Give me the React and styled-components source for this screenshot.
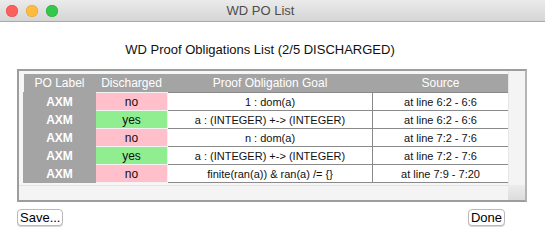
import React from "react";
import styled, { createGlobalStyle } from "styled-components";

const GlobalStyle = createGlobalStyle`
  html, body {
    margin: 0;
    padding: 0;
    background: #ffffff;
  }
  body {
    font-family: "Liberation Sans", Arial, sans-serif;
  }
`;

const Window = styled.div`
  width: 545px;
  height: 246px;
  display: flex;
  flex-direction: column;
  background: #ffffff;
  overflow: hidden;
`;

const TitleBar = styled.div`
  height: 21px;
  display: flex;
  align-items: center;
  padding-left: 6px;
  background: linear-gradient(#ebebeb, #d5d5d5);
  border-bottom: 1px solid #a9a9a9;
  position: relative;
`;

const Light = styled.span`
  width: 12px;
  height: 12px;
  border-radius: 50%;
  margin-right: 8px;
  background: ${(p) => p.color};
  box-shadow: inset 0 0 0 0.5px ${(p) => p.edge};
`;

const WindowTitle = styled.div`
  position: absolute;
  left: 0;
  width: 521px;
  text-align: center;
  font-size: 13px;
  color: #4d4d4d;
  font-family: "Liberation Sans", Arial, sans-serif;
`;

const Heading = styled.div`
  width: 520px;
  text-align: center;
  margin-top: 20px;
  font-size: 13px;
  color: #111;
  line-height: 16px;
`;

const Frame = styled.div`
  margin: 11px 0 0 17px;
  width: 506px;
  height: 129px;
  border: 2px solid #9d9d9d;
  border-right-color: #b5b5b5;
  background: #f6f6f6;
  display: grid;
  grid-template-columns: 1fr 17px;
  grid-template-rows: 1fr 15px;
`;

const Viewport = styled.div`
  padding: 3px 0 0 4px;
  overflow: hidden;
`;

const VScroll = styled.div`
  background: #f4f4f4;
  border-left: 1px solid #e6e6e6;
`;

const HScroll = styled.div`
  background: #f4f4f4;
  border-top: 1px solid #e3e3e3;
`;

const Corner = styled.div`
  background: linear-gradient(#ececec, #dcdcdc);
`;

const Table = styled.table`
  border-collapse: collapse;
  table-layout: fixed;
  width: 485px;
  font-size: 11px;
  font-family: "Liberation Sans", Arial, sans-serif;
`;

const HeadCell = styled.th`
  background: #a4a4a4;
  color: #ffffff;
  font-weight: normal;
  height: 18px;
  padding: 0;
  font-size: 12px;
  text-align: center;
`;

const Cell = styled.td`
  height: 17px;
  padding: 0;
  text-align: center;
  color: #111;
  background: ${(p) =>
    p.$kind === "label"
      ? "#a4a4a4"
      : p.$kind === "yes"
      ? "#90ee90"
      : p.$kind === "no"
      ? "#ffc0cb"
      : "#ffffff"};
  border: 1px solid
    ${(p) =>
      p.$kind === "label"
        ? "#a4a4a4"
        : p.$kind === "plain"
        ? "#8a8a8a"
        : "#f2f2f2"};
  ${(p) =>
    p.$kind === "label" &&
    `color: #ffffff; font-weight: bold; font-size: 12px;`}
  ${(p) => (p.$kind === "yes" || p.$kind === "no") && `font-size: 12px;`}
`;

const ButtonRow = styled.div`
  display: flex;
  justify-content: space-between;
  width: 488px;
  margin: 7px 0 0 17px;
`;

const Button = styled.button`
  height: 17px;
  padding: 0 2px;
  border: 1px solid #b9b9b9;
  border-radius: 4px;
  background: #ffffff;
  font-family: "Liberation Sans", Arial, sans-serif;
  font-size: 13px;
  line-height: 15px;
  color: #000;
  box-shadow: 0 1px 0 #d8d8d8;
`;

const rows = [
  ["no", "1 : dom(a)", "at line 6:2 - 6:6"],
  ["yes", "a : (INTEGER) +-> (INTEGER)", "at line 6:2 - 6:6"],
  ["no", "n : dom(a)", "at line 7:2 - 7:6"],
  ["yes", "a : (INTEGER) +-> (INTEGER)", "at line 7:2 - 7:6"],
  ["no", "finite(ran(a)) & ran(a) /= {}", "at line 7:9 - 7:20"],
];

export default function App() {
  return (
    <>
      <GlobalStyle />
      <Window>
        <TitleBar>
          <Light color="#fc605c" edge="#de4a45" />
          <Light color="#fdbc40" edge="#dea034" />
          <Light color="#34c84a" edge="#27aa35" />
          <WindowTitle>WD PO List</WindowTitle>
        </TitleBar>
        <Heading>WD Proof Obligations List (2/5 DISCHARGED)</Heading>
        <Frame>
          <Viewport>
            <Table>
              <colgroup>
                <col style={{ width: 72 }} />
                <col style={{ width: 72 }} />
                <col style={{ width: 205 }} />
                <col style={{ width: 136 }} />
              </colgroup>
              <thead>
                <tr>
                  <HeadCell>PO Label</HeadCell>
                  <HeadCell>Discharged</HeadCell>
                  <HeadCell>Proof Obligation Goal</HeadCell>
                  <HeadCell>Source</HeadCell>
                </tr>
              </thead>
              <tbody>
                {rows.map(([status, goal, source], i) => (
                  <tr key={i}>
                    <Cell $kind="label">AXM</Cell>
                    <Cell $kind={status}>{status}</Cell>
                    <Cell $kind="plain">{goal}</Cell>
                    <Cell $kind="plain">{source}</Cell>
                  </tr>
                ))}
              </tbody>
            </Table>
          </Viewport>
          <VScroll />
          <HScroll />
          <Corner />
        </Frame>
        <ButtonRow>
          <Button>Save...</Button>
          <Button>Done</Button>
        </ButtonRow>
      </Window>
    </>
  );
}
